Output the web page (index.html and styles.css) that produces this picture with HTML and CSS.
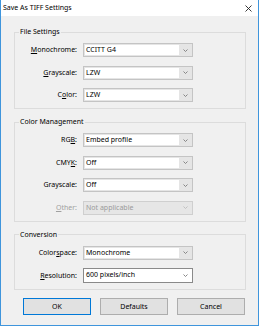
FILE: index.html
```html
<!DOCTYPE html>
<html lang="en">
<head>
    <meta charset="UTF-8">
    <meta name="viewport" content="width=device-width, initial-scale=1.0">
    <title>Save As TIFF Settings</title>
    <link rel="stylesheet" href="styles.css">
</head>
<body>

    <div class="window">
        <div class="titlebar">
            <span class="title">Save As TIFF Settings</span>
            <svg class="close" width="7" height="7" viewBox="0 0 7 7">
                <path d="M0.5 0.5 L6.5 6.5 M6.5 0.5 L0.5 6.5" stroke="#222" stroke-width="0.9" fill="none"/>
            </svg>
        </div>

        <div class="client">
            <fieldset class="group">
                <legend>File Settings</legend>
                <div class="rows">
                    <label class="label"><u>M</u>onochrome:</label>
                    <div class="combo"><span class="value">CCITT G4</span><span class="arrow"><svg width="5" height="3" viewBox="0 0 5 3"><polyline points="0.5,0.5 2.5,2.5 4.5,0.5" fill="none" stroke="#7a7a7a" stroke-width="0.9"/></svg></span></div>

                    <label class="label"><u>G</u>rayscale:</label>
                    <div class="combo"><span class="value">LZW</span><span class="arrow"><svg width="5" height="3" viewBox="0 0 5 3"><polyline points="0.5,0.5 2.5,2.5 4.5,0.5" fill="none" stroke="#7a7a7a" stroke-width="0.9"/></svg></span></div>

                    <label class="label">C<u>o</u>lor:</label>
                    <div class="combo"><span class="value">LZW</span><span class="arrow"><svg width="5" height="3" viewBox="0 0 5 3"><polyline points="0.5,0.5 2.5,2.5 4.5,0.5" fill="none" stroke="#7a7a7a" stroke-width="0.9"/></svg></span></div>
                </div>
            </fieldset>

            <fieldset class="group">
                <legend>Color Management</legend>
                <div class="rows">
                    <label class="label">RG<u>B</u>:</label>
                    <div class="combo"><span class="value">Embed profile</span><span class="arrow"><svg width="5" height="3" viewBox="0 0 5 3"><polyline points="0.5,0.5 2.5,2.5 4.5,0.5" fill="none" stroke="#7a7a7a" stroke-width="0.9"/></svg></span></div>

                    <label class="label">CMY<u>K</u>:</label>
                    <div class="combo"><span class="value">Off</span><span class="arrow"><svg width="5" height="3" viewBox="0 0 5 3"><polyline points="0.5,0.5 2.5,2.5 4.5,0.5" fill="none" stroke="#7a7a7a" stroke-width="0.9"/></svg></span></div>

                    <label class="label">Grayscale:</label>
                    <div class="combo"><span class="value">Off</span><span class="arrow"><svg width="5" height="3" viewBox="0 0 5 3"><polyline points="0.5,0.5 2.5,2.5 4.5,0.5" fill="none" stroke="#7a7a7a" stroke-width="0.9"/></svg></span></div>

                    <label class="label disabled"><u>O</u>ther:</label>
                    <div class="combo disabled"><span class="value">Not applicable</span><span class="arrow"><svg width="5" height="3" viewBox="0 0 5 3"><polyline points="0.5,0.5 2.5,2.5 4.5,0.5" fill="none" stroke="#bcbcbc" stroke-width="0.9"/></svg></span></div>
                </div>
            </fieldset>

            <fieldset class="group">
                <legend>Conversion</legend>
                <div class="rows">
                    <label class="label">Color<u>s</u>pace:</label>
                    <div class="combo"><span class="value">Monochrome</span><span class="arrow"><svg width="5" height="3" viewBox="0 0 5 3"><polyline points="0.5,0.5 2.5,2.5 4.5,0.5" fill="none" stroke="#7a7a7a" stroke-width="0.9"/></svg></span></div>

                    <label class="label"><u>R</u>esolution:</label>
                    <div class="combo edit"><span class="value">600 pixels/inch</span><span class="arrow"><svg width="5" height="3" viewBox="0 0 5 3"><polyline points="0.5,0.5 2.5,2.5 4.5,0.5" fill="none" stroke="#7a7a7a" stroke-width="0.9"/></svg></span></div>
                </div>
            </fieldset>

            <div class="buttons">
                <button class="btn default">OK</button>
                <button class="btn">Defaults</button>
                <button class="btn">Cancel</button>
            </div>
        </div>
    </div>

</body>
</html>
```

FILE: styles.css
```css
html, body {
    margin: 0;
    padding: 0;
}
body {
    font-family: "Noto Sans", "Open Sans", sans-serif;
    font-size: 7px;
    color: #000;
    background-color: #f0f0f0;
}
.window {
    box-sizing: border-box;
    width: 259px;
    height: 326px;
    border: 1px solid #3f95dc;
    border-top: none;
    background-color: #f0f0f0;
    display: flex;
    flex-direction: column;
}
.titlebar {
    height: 16px;
    flex: none;
    background-color: #fff;
    display: flex;
    align-items: center;
    justify-content: space-between;
    padding: 0 6px 0 2px;
}
.title {
    line-height: 10px;
}
.client {
    flex: 1;
    display: flex;
    flex-direction: column;
    gap: 8px;
    padding: 11px 12px 0 13px;
}
.group {
    margin: 0;
    padding: 6px 0;
    border: 1px solid #dcdcdc;
    min-width: 0;
}
.group legend {
    margin-left: 4px;
    padding: 0 1px;
    line-height: 10px;
}
.rows {
    display: grid;
    grid-template-columns: 62px 110px;
    column-gap: 6px;
    row-gap: 8.5px;
    align-items: center;
}
.label {
    text-align: right;
    line-height: 10px;
    white-space: nowrap;
}
.label.disabled {
    color: #a0a0a0;
}
.combo {
    box-sizing: border-box;
    height: 14px;
    border: 1px solid #c4c4c4;
    background-color: #e5e5e5;
    padding: 1px;
    display: flex;
}
.combo .value {
    flex: 1;
    background-color: #fff;
    line-height: 10px;
    padding-left: 1px;
    white-space: nowrap;
    overflow: hidden;
}
.combo .arrow {
    width: 12px;
    display: flex;
    align-items: center;
    justify-content: center;
}
.combo.disabled {
    background-color: #e6e6e6;
    border-color: #cfcfcf;
    color: #9a9a9a;
}
.combo.disabled .value {
    background-color: transparent;
}
.combo.edit {
    height: 15px;
    background-color: #fff;
    border-color: #8a8a8a;
}
.buttons {
    display: flex;
    justify-content: space-between;
    padding: 0 1px 0 9px;
}
.btn {
    box-sizing: border-box;
    width: 68px;
    height: 17px;
    padding: 0;
    border: 1px solid #adadad;
    background-color: #e1e1e1;
    font-family: inherit;
    font-size: 7px;
    color: #000;
}
.btn.default {
    border-color: #0078d7;
}
```
